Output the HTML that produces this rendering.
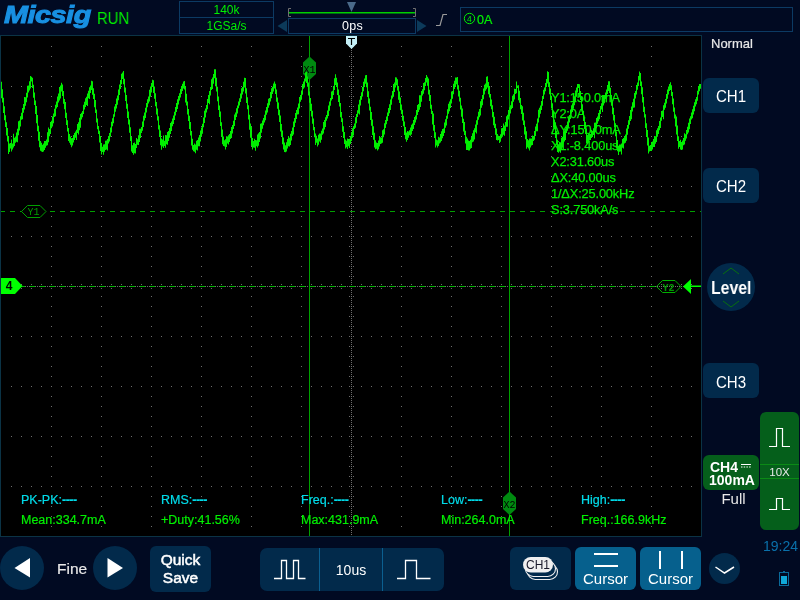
<!DOCTYPE html>
<html><head><meta charset="utf-8"><style>
*{margin:0;padding:0;box-sizing:border-box}
html,body{width:800px;height:600px;overflow:hidden;background:#010a22;font-family:"Liberation Sans",sans-serif}
.a{position:absolute}
.btn{position:absolute;background:#022a4b;border-radius:6px;color:#fff;text-align:center;will-change:transform}
.t{position:absolute;white-space:nowrap;line-height:1;will-change:transform}
</style></head><body>
<!-- header -->
<div class="t" style="left:4px;top:3px;font-size:24px;font-weight:bold;font-style:italic;color:#1890e2;letter-spacing:-0.4px;transform:scaleX(1.2);transform-origin:0 0;-webkit-text-stroke:1px #1890e2">Micsig</div>
<div class="t" style="left:97px;top:11px;font-size:16px;color:#00f000;transform:scaleX(0.93);transform-origin:0 0">RUN</div>
<div class="a" style="left:179px;top:1px;width:95px;height:33px;border:1px solid #0c3a63"></div>
<div class="a" style="left:179px;top:17px;width:95px;height:1px;background:#0c3a63"></div>
<div class="t" style="left:179px;top:4px;width:95px;text-align:center;font-size:12px;color:#00f000">140k</div>
<div class="t" style="left:179px;top:20px;width:95px;text-align:center;font-size:12px;color:#00f000">1GSa/s</div>

<svg class="a" style="left:0;top:0" width="800" height="600">
  <!-- display -->
  <rect x="0.5" y="35.5" width="701" height="501" fill="#000" stroke="#0b3345" stroke-width="1"/>
  <path d="M51 46h1v1h-1zM51 56h1v1h-1zM51 66h1v1h-1zM51 76h1v1h-1zM51 86h1v1h-1zM51 96h1v1h-1zM51 106h1v1h-1zM51 116h1v1h-1zM51 126h1v1h-1zM51 136h1v1h-1zM51 146h1v1h-1zM51 156h1v1h-1zM51 166h1v1h-1zM51 176h1v1h-1zM51 186h1v1h-1zM51 196h1v1h-1zM51 206h1v1h-1zM51 216h1v1h-1zM51 226h1v1h-1zM51 236h1v1h-1zM51 246h1v1h-1zM51 256h1v1h-1zM51 266h1v1h-1zM51 276h1v1h-1zM51 286h1v1h-1zM51 296h1v1h-1zM51 306h1v1h-1zM51 316h1v1h-1zM51 326h1v1h-1zM51 336h1v1h-1zM51 346h1v1h-1zM51 356h1v1h-1zM51 366h1v1h-1zM51 376h1v1h-1zM51 386h1v1h-1zM51 396h1v1h-1zM51 406h1v1h-1zM51 416h1v1h-1zM51 426h1v1h-1zM51 436h1v1h-1zM51 446h1v1h-1zM51 456h1v1h-1zM51 466h1v1h-1zM51 476h1v1h-1zM51 486h1v1h-1zM51 496h1v1h-1zM51 506h1v1h-1zM51 516h1v1h-1zM51 526h1v1h-1zM101 46h1v1h-1zM101 56h1v1h-1zM101 66h1v1h-1zM101 76h1v1h-1zM101 86h1v1h-1zM101 96h1v1h-1zM101 106h1v1h-1zM101 116h1v1h-1zM101 126h1v1h-1zM101 136h1v1h-1zM101 146h1v1h-1zM101 156h1v1h-1zM101 166h1v1h-1zM101 176h1v1h-1zM101 186h1v1h-1zM101 196h1v1h-1zM101 206h1v1h-1zM101 216h1v1h-1zM101 226h1v1h-1zM101 236h1v1h-1zM101 246h1v1h-1zM101 256h1v1h-1zM101 266h1v1h-1zM101 276h1v1h-1zM101 286h1v1h-1zM101 296h1v1h-1zM101 306h1v1h-1zM101 316h1v1h-1zM101 326h1v1h-1zM101 336h1v1h-1zM101 346h1v1h-1zM101 356h1v1h-1zM101 366h1v1h-1zM101 376h1v1h-1zM101 386h1v1h-1zM101 396h1v1h-1zM101 406h1v1h-1zM101 416h1v1h-1zM101 426h1v1h-1zM101 436h1v1h-1zM101 446h1v1h-1zM101 456h1v1h-1zM101 466h1v1h-1zM101 476h1v1h-1zM101 486h1v1h-1zM101 496h1v1h-1zM101 506h1v1h-1zM101 516h1v1h-1zM101 526h1v1h-1zM151 46h1v1h-1zM151 56h1v1h-1zM151 66h1v1h-1zM151 76h1v1h-1zM151 86h1v1h-1zM151 96h1v1h-1zM151 106h1v1h-1zM151 116h1v1h-1zM151 126h1v1h-1zM151 136h1v1h-1zM151 146h1v1h-1zM151 156h1v1h-1zM151 166h1v1h-1zM151 176h1v1h-1zM151 186h1v1h-1zM151 196h1v1h-1zM151 206h1v1h-1zM151 216h1v1h-1zM151 226h1v1h-1zM151 236h1v1h-1zM151 246h1v1h-1zM151 256h1v1h-1zM151 266h1v1h-1zM151 276h1v1h-1zM151 286h1v1h-1zM151 296h1v1h-1zM151 306h1v1h-1zM151 316h1v1h-1zM151 326h1v1h-1zM151 336h1v1h-1zM151 346h1v1h-1zM151 356h1v1h-1zM151 366h1v1h-1zM151 376h1v1h-1zM151 386h1v1h-1zM151 396h1v1h-1zM151 406h1v1h-1zM151 416h1v1h-1zM151 426h1v1h-1zM151 436h1v1h-1zM151 446h1v1h-1zM151 456h1v1h-1zM151 466h1v1h-1zM151 476h1v1h-1zM151 486h1v1h-1zM151 496h1v1h-1zM151 506h1v1h-1zM151 516h1v1h-1zM151 526h1v1h-1zM201 46h1v1h-1zM201 56h1v1h-1zM201 66h1v1h-1zM201 76h1v1h-1zM201 86h1v1h-1zM201 96h1v1h-1zM201 106h1v1h-1zM201 116h1v1h-1zM201 126h1v1h-1zM201 136h1v1h-1zM201 146h1v1h-1zM201 156h1v1h-1zM201 166h1v1h-1zM201 176h1v1h-1zM201 186h1v1h-1zM201 196h1v1h-1zM201 206h1v1h-1zM201 216h1v1h-1zM201 226h1v1h-1zM201 236h1v1h-1zM201 246h1v1h-1zM201 256h1v1h-1zM201 266h1v1h-1zM201 276h1v1h-1zM201 286h1v1h-1zM201 296h1v1h-1zM201 306h1v1h-1zM201 316h1v1h-1zM201 326h1v1h-1zM201 336h1v1h-1zM201 346h1v1h-1zM201 356h1v1h-1zM201 366h1v1h-1zM201 376h1v1h-1zM201 386h1v1h-1zM201 396h1v1h-1zM201 406h1v1h-1zM201 416h1v1h-1zM201 426h1v1h-1zM201 436h1v1h-1zM201 446h1v1h-1zM201 456h1v1h-1zM201 466h1v1h-1zM201 476h1v1h-1zM201 486h1v1h-1zM201 496h1v1h-1zM201 506h1v1h-1zM201 516h1v1h-1zM201 526h1v1h-1zM251 46h1v1h-1zM251 56h1v1h-1zM251 66h1v1h-1zM251 76h1v1h-1zM251 86h1v1h-1zM251 96h1v1h-1zM251 106h1v1h-1zM251 116h1v1h-1zM251 126h1v1h-1zM251 136h1v1h-1zM251 146h1v1h-1zM251 156h1v1h-1zM251 166h1v1h-1zM251 176h1v1h-1zM251 186h1v1h-1zM251 196h1v1h-1zM251 206h1v1h-1zM251 216h1v1h-1zM251 226h1v1h-1zM251 236h1v1h-1zM251 246h1v1h-1zM251 256h1v1h-1zM251 266h1v1h-1zM251 276h1v1h-1zM251 286h1v1h-1zM251 296h1v1h-1zM251 306h1v1h-1zM251 316h1v1h-1zM251 326h1v1h-1zM251 336h1v1h-1zM251 346h1v1h-1zM251 356h1v1h-1zM251 366h1v1h-1zM251 376h1v1h-1zM251 386h1v1h-1zM251 396h1v1h-1zM251 406h1v1h-1zM251 416h1v1h-1zM251 426h1v1h-1zM251 436h1v1h-1zM251 446h1v1h-1zM251 456h1v1h-1zM251 466h1v1h-1zM251 476h1v1h-1zM251 486h1v1h-1zM251 496h1v1h-1zM251 506h1v1h-1zM251 516h1v1h-1zM251 526h1v1h-1zM301 46h1v1h-1zM301 56h1v1h-1zM301 66h1v1h-1zM301 76h1v1h-1zM301 86h1v1h-1zM301 96h1v1h-1zM301 106h1v1h-1zM301 116h1v1h-1zM301 126h1v1h-1zM301 136h1v1h-1zM301 146h1v1h-1zM301 156h1v1h-1zM301 166h1v1h-1zM301 176h1v1h-1zM301 186h1v1h-1zM301 196h1v1h-1zM301 206h1v1h-1zM301 216h1v1h-1zM301 226h1v1h-1zM301 236h1v1h-1zM301 246h1v1h-1zM301 256h1v1h-1zM301 266h1v1h-1zM301 276h1v1h-1zM301 286h1v1h-1zM301 296h1v1h-1zM301 306h1v1h-1zM301 316h1v1h-1zM301 326h1v1h-1zM301 336h1v1h-1zM301 346h1v1h-1zM301 356h1v1h-1zM301 366h1v1h-1zM301 376h1v1h-1zM301 386h1v1h-1zM301 396h1v1h-1zM301 406h1v1h-1zM301 416h1v1h-1zM301 426h1v1h-1zM301 436h1v1h-1zM301 446h1v1h-1zM301 456h1v1h-1zM301 466h1v1h-1zM301 476h1v1h-1zM301 486h1v1h-1zM301 496h1v1h-1zM301 506h1v1h-1zM301 516h1v1h-1zM301 526h1v1h-1zM401 46h1v1h-1zM401 56h1v1h-1zM401 66h1v1h-1zM401 76h1v1h-1zM401 86h1v1h-1zM401 96h1v1h-1zM401 106h1v1h-1zM401 116h1v1h-1zM401 126h1v1h-1zM401 136h1v1h-1zM401 146h1v1h-1zM401 156h1v1h-1zM401 166h1v1h-1zM401 176h1v1h-1zM401 186h1v1h-1zM401 196h1v1h-1zM401 206h1v1h-1zM401 216h1v1h-1zM401 226h1v1h-1zM401 236h1v1h-1zM401 246h1v1h-1zM401 256h1v1h-1zM401 266h1v1h-1zM401 276h1v1h-1zM401 286h1v1h-1zM401 296h1v1h-1zM401 306h1v1h-1zM401 316h1v1h-1zM401 326h1v1h-1zM401 336h1v1h-1zM401 346h1v1h-1zM401 356h1v1h-1zM401 366h1v1h-1zM401 376h1v1h-1zM401 386h1v1h-1zM401 396h1v1h-1zM401 406h1v1h-1zM401 416h1v1h-1zM401 426h1v1h-1zM401 436h1v1h-1zM401 446h1v1h-1zM401 456h1v1h-1zM401 466h1v1h-1zM401 476h1v1h-1zM401 486h1v1h-1zM401 496h1v1h-1zM401 506h1v1h-1zM401 516h1v1h-1zM401 526h1v1h-1zM451 46h1v1h-1zM451 56h1v1h-1zM451 66h1v1h-1zM451 76h1v1h-1zM451 86h1v1h-1zM451 96h1v1h-1zM451 106h1v1h-1zM451 116h1v1h-1zM451 126h1v1h-1zM451 136h1v1h-1zM451 146h1v1h-1zM451 156h1v1h-1zM451 166h1v1h-1zM451 176h1v1h-1zM451 186h1v1h-1zM451 196h1v1h-1zM451 206h1v1h-1zM451 216h1v1h-1zM451 226h1v1h-1zM451 236h1v1h-1zM451 246h1v1h-1zM451 256h1v1h-1zM451 266h1v1h-1zM451 276h1v1h-1zM451 286h1v1h-1zM451 296h1v1h-1zM451 306h1v1h-1zM451 316h1v1h-1zM451 326h1v1h-1zM451 336h1v1h-1zM451 346h1v1h-1zM451 356h1v1h-1zM451 366h1v1h-1zM451 376h1v1h-1zM451 386h1v1h-1zM451 396h1v1h-1zM451 406h1v1h-1zM451 416h1v1h-1zM451 426h1v1h-1zM451 436h1v1h-1zM451 446h1v1h-1zM451 456h1v1h-1zM451 466h1v1h-1zM451 476h1v1h-1zM451 486h1v1h-1zM451 496h1v1h-1zM451 506h1v1h-1zM451 516h1v1h-1zM451 526h1v1h-1zM501 46h1v1h-1zM501 56h1v1h-1zM501 66h1v1h-1zM501 76h1v1h-1zM501 86h1v1h-1zM501 96h1v1h-1zM501 106h1v1h-1zM501 116h1v1h-1zM501 126h1v1h-1zM501 136h1v1h-1zM501 146h1v1h-1zM501 156h1v1h-1zM501 166h1v1h-1zM501 176h1v1h-1zM501 186h1v1h-1zM501 196h1v1h-1zM501 206h1v1h-1zM501 216h1v1h-1zM501 226h1v1h-1zM501 236h1v1h-1zM501 246h1v1h-1zM501 256h1v1h-1zM501 266h1v1h-1zM501 276h1v1h-1zM501 286h1v1h-1zM501 296h1v1h-1zM501 306h1v1h-1zM501 316h1v1h-1zM501 326h1v1h-1zM501 336h1v1h-1zM501 346h1v1h-1zM501 356h1v1h-1zM501 366h1v1h-1zM501 376h1v1h-1zM501 386h1v1h-1zM501 396h1v1h-1zM501 406h1v1h-1zM501 416h1v1h-1zM501 426h1v1h-1zM501 436h1v1h-1zM501 446h1v1h-1zM501 456h1v1h-1zM501 466h1v1h-1zM501 476h1v1h-1zM501 486h1v1h-1zM501 496h1v1h-1zM501 506h1v1h-1zM501 516h1v1h-1zM501 526h1v1h-1zM551 46h1v1h-1zM551 56h1v1h-1zM551 66h1v1h-1zM551 76h1v1h-1zM551 86h1v1h-1zM551 96h1v1h-1zM551 106h1v1h-1zM551 116h1v1h-1zM551 126h1v1h-1zM551 136h1v1h-1zM551 146h1v1h-1zM551 156h1v1h-1zM551 166h1v1h-1zM551 176h1v1h-1zM551 186h1v1h-1zM551 196h1v1h-1zM551 206h1v1h-1zM551 216h1v1h-1zM551 226h1v1h-1zM551 236h1v1h-1zM551 246h1v1h-1zM551 256h1v1h-1zM551 266h1v1h-1zM551 276h1v1h-1zM551 286h1v1h-1zM551 296h1v1h-1zM551 306h1v1h-1zM551 316h1v1h-1zM551 326h1v1h-1zM551 336h1v1h-1zM551 346h1v1h-1zM551 356h1v1h-1zM551 366h1v1h-1zM551 376h1v1h-1zM551 386h1v1h-1zM551 396h1v1h-1zM551 406h1v1h-1zM551 416h1v1h-1zM551 426h1v1h-1zM551 436h1v1h-1zM551 446h1v1h-1zM551 456h1v1h-1zM551 466h1v1h-1zM551 476h1v1h-1zM551 486h1v1h-1zM551 496h1v1h-1zM551 506h1v1h-1zM551 516h1v1h-1zM551 526h1v1h-1zM601 46h1v1h-1zM601 56h1v1h-1zM601 66h1v1h-1zM601 76h1v1h-1zM601 86h1v1h-1zM601 96h1v1h-1zM601 106h1v1h-1zM601 116h1v1h-1zM601 126h1v1h-1zM601 136h1v1h-1zM601 146h1v1h-1zM601 156h1v1h-1zM601 166h1v1h-1zM601 176h1v1h-1zM601 186h1v1h-1zM601 196h1v1h-1zM601 206h1v1h-1zM601 216h1v1h-1zM601 226h1v1h-1zM601 236h1v1h-1zM601 246h1v1h-1zM601 256h1v1h-1zM601 266h1v1h-1zM601 276h1v1h-1zM601 286h1v1h-1zM601 296h1v1h-1zM601 306h1v1h-1zM601 316h1v1h-1zM601 326h1v1h-1zM601 336h1v1h-1zM601 346h1v1h-1zM601 356h1v1h-1zM601 366h1v1h-1zM601 376h1v1h-1zM601 386h1v1h-1zM601 396h1v1h-1zM601 406h1v1h-1zM601 416h1v1h-1zM601 426h1v1h-1zM601 436h1v1h-1zM601 446h1v1h-1zM601 456h1v1h-1zM601 466h1v1h-1zM601 476h1v1h-1zM601 486h1v1h-1zM601 496h1v1h-1zM601 506h1v1h-1zM601 516h1v1h-1zM601 526h1v1h-1zM651 46h1v1h-1zM651 56h1v1h-1zM651 66h1v1h-1zM651 76h1v1h-1zM651 86h1v1h-1zM651 96h1v1h-1zM651 106h1v1h-1zM651 116h1v1h-1zM651 126h1v1h-1zM651 136h1v1h-1zM651 146h1v1h-1zM651 156h1v1h-1zM651 166h1v1h-1zM651 176h1v1h-1zM651 186h1v1h-1zM651 196h1v1h-1zM651 206h1v1h-1zM651 216h1v1h-1zM651 226h1v1h-1zM651 236h1v1h-1zM651 246h1v1h-1zM651 256h1v1h-1zM651 266h1v1h-1zM651 276h1v1h-1zM651 286h1v1h-1zM651 296h1v1h-1zM651 306h1v1h-1zM651 316h1v1h-1zM651 326h1v1h-1zM651 336h1v1h-1zM651 346h1v1h-1zM651 356h1v1h-1zM651 366h1v1h-1zM651 376h1v1h-1zM651 386h1v1h-1zM651 396h1v1h-1zM651 406h1v1h-1zM651 416h1v1h-1zM651 426h1v1h-1zM651 436h1v1h-1zM651 446h1v1h-1zM651 456h1v1h-1zM651 466h1v1h-1zM651 476h1v1h-1zM651 486h1v1h-1zM651 496h1v1h-1zM651 506h1v1h-1zM651 516h1v1h-1zM651 526h1v1h-1zM11 86h1v1h-1zM21 86h1v1h-1zM31 86h1v1h-1zM41 86h1v1h-1zM61 86h1v1h-1zM71 86h1v1h-1zM81 86h1v1h-1zM91 86h1v1h-1zM111 86h1v1h-1zM121 86h1v1h-1zM131 86h1v1h-1zM141 86h1v1h-1zM161 86h1v1h-1zM171 86h1v1h-1zM181 86h1v1h-1zM191 86h1v1h-1zM211 86h1v1h-1zM221 86h1v1h-1zM231 86h1v1h-1zM241 86h1v1h-1zM261 86h1v1h-1zM271 86h1v1h-1zM281 86h1v1h-1zM291 86h1v1h-1zM311 86h1v1h-1zM321 86h1v1h-1zM331 86h1v1h-1zM341 86h1v1h-1zM361 86h1v1h-1zM371 86h1v1h-1zM381 86h1v1h-1zM391 86h1v1h-1zM411 86h1v1h-1zM421 86h1v1h-1zM431 86h1v1h-1zM441 86h1v1h-1zM461 86h1v1h-1zM471 86h1v1h-1zM481 86h1v1h-1zM491 86h1v1h-1zM511 86h1v1h-1zM521 86h1v1h-1zM531 86h1v1h-1zM541 86h1v1h-1zM561 86h1v1h-1zM571 86h1v1h-1zM581 86h1v1h-1zM591 86h1v1h-1zM611 86h1v1h-1zM621 86h1v1h-1zM631 86h1v1h-1zM641 86h1v1h-1zM661 86h1v1h-1zM671 86h1v1h-1zM681 86h1v1h-1zM691 86h1v1h-1zM11 136h1v1h-1zM21 136h1v1h-1zM31 136h1v1h-1zM41 136h1v1h-1zM61 136h1v1h-1zM71 136h1v1h-1zM81 136h1v1h-1zM91 136h1v1h-1zM111 136h1v1h-1zM121 136h1v1h-1zM131 136h1v1h-1zM141 136h1v1h-1zM161 136h1v1h-1zM171 136h1v1h-1zM181 136h1v1h-1zM191 136h1v1h-1zM211 136h1v1h-1zM221 136h1v1h-1zM231 136h1v1h-1zM241 136h1v1h-1zM261 136h1v1h-1zM271 136h1v1h-1zM281 136h1v1h-1zM291 136h1v1h-1zM311 136h1v1h-1zM321 136h1v1h-1zM331 136h1v1h-1zM341 136h1v1h-1zM361 136h1v1h-1zM371 136h1v1h-1zM381 136h1v1h-1zM391 136h1v1h-1zM411 136h1v1h-1zM421 136h1v1h-1zM431 136h1v1h-1zM441 136h1v1h-1zM461 136h1v1h-1zM471 136h1v1h-1zM481 136h1v1h-1zM491 136h1v1h-1zM511 136h1v1h-1zM521 136h1v1h-1zM531 136h1v1h-1zM541 136h1v1h-1zM561 136h1v1h-1zM571 136h1v1h-1zM581 136h1v1h-1zM591 136h1v1h-1zM611 136h1v1h-1zM621 136h1v1h-1zM631 136h1v1h-1zM641 136h1v1h-1zM661 136h1v1h-1zM671 136h1v1h-1zM681 136h1v1h-1zM691 136h1v1h-1zM11 186h1v1h-1zM21 186h1v1h-1zM31 186h1v1h-1zM41 186h1v1h-1zM61 186h1v1h-1zM71 186h1v1h-1zM81 186h1v1h-1zM91 186h1v1h-1zM111 186h1v1h-1zM121 186h1v1h-1zM131 186h1v1h-1zM141 186h1v1h-1zM161 186h1v1h-1zM171 186h1v1h-1zM181 186h1v1h-1zM191 186h1v1h-1zM211 186h1v1h-1zM221 186h1v1h-1zM231 186h1v1h-1zM241 186h1v1h-1zM261 186h1v1h-1zM271 186h1v1h-1zM281 186h1v1h-1zM291 186h1v1h-1zM311 186h1v1h-1zM321 186h1v1h-1zM331 186h1v1h-1zM341 186h1v1h-1zM361 186h1v1h-1zM371 186h1v1h-1zM381 186h1v1h-1zM391 186h1v1h-1zM411 186h1v1h-1zM421 186h1v1h-1zM431 186h1v1h-1zM441 186h1v1h-1zM461 186h1v1h-1zM471 186h1v1h-1zM481 186h1v1h-1zM491 186h1v1h-1zM511 186h1v1h-1zM521 186h1v1h-1zM531 186h1v1h-1zM541 186h1v1h-1zM561 186h1v1h-1zM571 186h1v1h-1zM581 186h1v1h-1zM591 186h1v1h-1zM611 186h1v1h-1zM621 186h1v1h-1zM631 186h1v1h-1zM641 186h1v1h-1zM661 186h1v1h-1zM671 186h1v1h-1zM681 186h1v1h-1zM691 186h1v1h-1zM11 236h1v1h-1zM21 236h1v1h-1zM31 236h1v1h-1zM41 236h1v1h-1zM61 236h1v1h-1zM71 236h1v1h-1zM81 236h1v1h-1zM91 236h1v1h-1zM111 236h1v1h-1zM121 236h1v1h-1zM131 236h1v1h-1zM141 236h1v1h-1zM161 236h1v1h-1zM171 236h1v1h-1zM181 236h1v1h-1zM191 236h1v1h-1zM211 236h1v1h-1zM221 236h1v1h-1zM231 236h1v1h-1zM241 236h1v1h-1zM261 236h1v1h-1zM271 236h1v1h-1zM281 236h1v1h-1zM291 236h1v1h-1zM311 236h1v1h-1zM321 236h1v1h-1zM331 236h1v1h-1zM341 236h1v1h-1zM361 236h1v1h-1zM371 236h1v1h-1zM381 236h1v1h-1zM391 236h1v1h-1zM411 236h1v1h-1zM421 236h1v1h-1zM431 236h1v1h-1zM441 236h1v1h-1zM461 236h1v1h-1zM471 236h1v1h-1zM481 236h1v1h-1zM491 236h1v1h-1zM511 236h1v1h-1zM521 236h1v1h-1zM531 236h1v1h-1zM541 236h1v1h-1zM561 236h1v1h-1zM571 236h1v1h-1zM581 236h1v1h-1zM591 236h1v1h-1zM611 236h1v1h-1zM621 236h1v1h-1zM631 236h1v1h-1zM641 236h1v1h-1zM661 236h1v1h-1zM671 236h1v1h-1zM681 236h1v1h-1zM691 236h1v1h-1zM11 336h1v1h-1zM21 336h1v1h-1zM31 336h1v1h-1zM41 336h1v1h-1zM61 336h1v1h-1zM71 336h1v1h-1zM81 336h1v1h-1zM91 336h1v1h-1zM111 336h1v1h-1zM121 336h1v1h-1zM131 336h1v1h-1zM141 336h1v1h-1zM161 336h1v1h-1zM171 336h1v1h-1zM181 336h1v1h-1zM191 336h1v1h-1zM211 336h1v1h-1zM221 336h1v1h-1zM231 336h1v1h-1zM241 336h1v1h-1zM261 336h1v1h-1zM271 336h1v1h-1zM281 336h1v1h-1zM291 336h1v1h-1zM311 336h1v1h-1zM321 336h1v1h-1zM331 336h1v1h-1zM341 336h1v1h-1zM361 336h1v1h-1zM371 336h1v1h-1zM381 336h1v1h-1zM391 336h1v1h-1zM411 336h1v1h-1zM421 336h1v1h-1zM431 336h1v1h-1zM441 336h1v1h-1zM461 336h1v1h-1zM471 336h1v1h-1zM481 336h1v1h-1zM491 336h1v1h-1zM511 336h1v1h-1zM521 336h1v1h-1zM531 336h1v1h-1zM541 336h1v1h-1zM561 336h1v1h-1zM571 336h1v1h-1zM581 336h1v1h-1zM591 336h1v1h-1zM611 336h1v1h-1zM621 336h1v1h-1zM631 336h1v1h-1zM641 336h1v1h-1zM661 336h1v1h-1zM671 336h1v1h-1zM681 336h1v1h-1zM691 336h1v1h-1zM11 386h1v1h-1zM21 386h1v1h-1zM31 386h1v1h-1zM41 386h1v1h-1zM61 386h1v1h-1zM71 386h1v1h-1zM81 386h1v1h-1zM91 386h1v1h-1zM111 386h1v1h-1zM121 386h1v1h-1zM131 386h1v1h-1zM141 386h1v1h-1zM161 386h1v1h-1zM171 386h1v1h-1zM181 386h1v1h-1zM191 386h1v1h-1zM211 386h1v1h-1zM221 386h1v1h-1zM231 386h1v1h-1zM241 386h1v1h-1zM261 386h1v1h-1zM271 386h1v1h-1zM281 386h1v1h-1zM291 386h1v1h-1zM311 386h1v1h-1zM321 386h1v1h-1zM331 386h1v1h-1zM341 386h1v1h-1zM361 386h1v1h-1zM371 386h1v1h-1zM381 386h1v1h-1zM391 386h1v1h-1zM411 386h1v1h-1zM421 386h1v1h-1zM431 386h1v1h-1zM441 386h1v1h-1zM461 386h1v1h-1zM471 386h1v1h-1zM481 386h1v1h-1zM491 386h1v1h-1zM511 386h1v1h-1zM521 386h1v1h-1zM531 386h1v1h-1zM541 386h1v1h-1zM561 386h1v1h-1zM571 386h1v1h-1zM581 386h1v1h-1zM591 386h1v1h-1zM611 386h1v1h-1zM621 386h1v1h-1zM631 386h1v1h-1zM641 386h1v1h-1zM661 386h1v1h-1zM671 386h1v1h-1zM681 386h1v1h-1zM691 386h1v1h-1zM11 436h1v1h-1zM21 436h1v1h-1zM31 436h1v1h-1zM41 436h1v1h-1zM61 436h1v1h-1zM71 436h1v1h-1zM81 436h1v1h-1zM91 436h1v1h-1zM111 436h1v1h-1zM121 436h1v1h-1zM131 436h1v1h-1zM141 436h1v1h-1zM161 436h1v1h-1zM171 436h1v1h-1zM181 436h1v1h-1zM191 436h1v1h-1zM211 436h1v1h-1zM221 436h1v1h-1zM231 436h1v1h-1zM241 436h1v1h-1zM261 436h1v1h-1zM271 436h1v1h-1zM281 436h1v1h-1zM291 436h1v1h-1zM311 436h1v1h-1zM321 436h1v1h-1zM331 436h1v1h-1zM341 436h1v1h-1zM361 436h1v1h-1zM371 436h1v1h-1zM381 436h1v1h-1zM391 436h1v1h-1zM411 436h1v1h-1zM421 436h1v1h-1zM431 436h1v1h-1zM441 436h1v1h-1zM461 436h1v1h-1zM471 436h1v1h-1zM481 436h1v1h-1zM491 436h1v1h-1zM511 436h1v1h-1zM521 436h1v1h-1zM531 436h1v1h-1zM541 436h1v1h-1zM561 436h1v1h-1zM571 436h1v1h-1zM581 436h1v1h-1zM591 436h1v1h-1zM611 436h1v1h-1zM621 436h1v1h-1zM631 436h1v1h-1zM641 436h1v1h-1zM661 436h1v1h-1zM671 436h1v1h-1zM681 436h1v1h-1zM691 436h1v1h-1zM11 486h1v1h-1zM21 486h1v1h-1zM31 486h1v1h-1zM41 486h1v1h-1zM61 486h1v1h-1zM71 486h1v1h-1zM81 486h1v1h-1zM91 486h1v1h-1zM111 486h1v1h-1zM121 486h1v1h-1zM131 486h1v1h-1zM141 486h1v1h-1zM161 486h1v1h-1zM171 486h1v1h-1zM181 486h1v1h-1zM191 486h1v1h-1zM211 486h1v1h-1zM221 486h1v1h-1zM231 486h1v1h-1zM241 486h1v1h-1zM261 486h1v1h-1zM271 486h1v1h-1zM281 486h1v1h-1zM291 486h1v1h-1zM311 486h1v1h-1zM321 486h1v1h-1zM331 486h1v1h-1zM341 486h1v1h-1zM361 486h1v1h-1zM371 486h1v1h-1zM381 486h1v1h-1zM391 486h1v1h-1zM411 486h1v1h-1zM421 486h1v1h-1zM431 486h1v1h-1zM441 486h1v1h-1zM461 486h1v1h-1zM471 486h1v1h-1zM481 486h1v1h-1zM491 486h1v1h-1zM511 486h1v1h-1zM521 486h1v1h-1zM531 486h1v1h-1zM541 486h1v1h-1zM561 486h1v1h-1zM571 486h1v1h-1zM581 486h1v1h-1zM591 486h1v1h-1zM611 486h1v1h-1zM621 486h1v1h-1zM631 486h1v1h-1zM641 486h1v1h-1zM661 486h1v1h-1zM671 486h1v1h-1zM681 486h1v1h-1zM691 486h1v1h-1zM351 36h1v1h-1zM351 38h1v1h-1zM351 40h1v1h-1zM351 42h1v1h-1zM351 44h1v1h-1zM351 46h1v1h-1zM351 48h1v1h-1zM351 50h1v1h-1zM351 52h1v1h-1zM351 54h1v1h-1zM351 56h1v1h-1zM351 58h1v1h-1zM351 60h1v1h-1zM351 62h1v1h-1zM351 64h1v1h-1zM351 66h1v1h-1zM351 68h1v1h-1zM351 70h1v1h-1zM351 72h1v1h-1zM351 74h1v1h-1zM351 76h1v1h-1zM351 78h1v1h-1zM351 80h1v1h-1zM351 82h1v1h-1zM351 84h1v1h-1zM351 86h1v1h-1zM351 88h1v1h-1zM351 90h1v1h-1zM351 92h1v1h-1zM351 94h1v1h-1zM351 96h1v1h-1zM351 98h1v1h-1zM351 100h1v1h-1zM351 102h1v1h-1zM351 104h1v1h-1zM351 106h1v1h-1zM351 108h1v1h-1zM351 110h1v1h-1zM351 112h1v1h-1zM351 114h1v1h-1zM351 116h1v1h-1zM351 118h1v1h-1zM351 120h1v1h-1zM351 122h1v1h-1zM351 124h1v1h-1zM351 126h1v1h-1zM351 128h1v1h-1zM351 130h1v1h-1zM351 132h1v1h-1zM351 134h1v1h-1zM351 136h1v1h-1zM351 138h1v1h-1zM351 140h1v1h-1zM351 142h1v1h-1zM351 144h1v1h-1zM351 146h1v1h-1zM351 148h1v1h-1zM351 150h1v1h-1zM351 152h1v1h-1zM351 154h1v1h-1zM351 156h1v1h-1zM351 158h1v1h-1zM351 160h1v1h-1zM351 162h1v1h-1zM351 164h1v1h-1zM351 166h1v1h-1zM351 168h1v1h-1zM351 170h1v1h-1zM351 172h1v1h-1zM351 174h1v1h-1zM351 176h1v1h-1zM351 178h1v1h-1zM351 180h1v1h-1zM351 182h1v1h-1zM351 184h1v1h-1zM351 186h1v1h-1zM351 188h1v1h-1zM351 190h1v1h-1zM351 192h1v1h-1zM351 194h1v1h-1zM351 196h1v1h-1zM351 198h1v1h-1zM351 200h1v1h-1zM351 202h1v1h-1zM351 204h1v1h-1zM351 206h1v1h-1zM351 208h1v1h-1zM351 210h1v1h-1zM351 212h1v1h-1zM351 214h1v1h-1zM351 216h1v1h-1zM351 218h1v1h-1zM351 220h1v1h-1zM351 222h1v1h-1zM351 224h1v1h-1zM351 226h1v1h-1zM351 228h1v1h-1zM351 230h1v1h-1zM351 232h1v1h-1zM351 234h1v1h-1zM351 236h1v1h-1zM351 238h1v1h-1zM351 240h1v1h-1zM351 242h1v1h-1zM351 244h1v1h-1zM351 246h1v1h-1zM351 248h1v1h-1zM351 250h1v1h-1zM351 252h1v1h-1zM351 254h1v1h-1zM351 256h1v1h-1zM351 258h1v1h-1zM351 260h1v1h-1zM351 262h1v1h-1zM351 264h1v1h-1zM351 266h1v1h-1zM351 268h1v1h-1zM351 270h1v1h-1zM351 272h1v1h-1zM351 274h1v1h-1zM351 276h1v1h-1zM351 278h1v1h-1zM351 280h1v1h-1zM351 282h1v1h-1zM351 284h1v1h-1zM351 286h1v1h-1zM351 288h1v1h-1zM351 290h1v1h-1zM351 292h1v1h-1zM351 294h1v1h-1zM351 296h1v1h-1zM351 298h1v1h-1zM351 300h1v1h-1zM351 302h1v1h-1zM351 304h1v1h-1zM351 306h1v1h-1zM351 308h1v1h-1zM351 310h1v1h-1zM351 312h1v1h-1zM351 314h1v1h-1zM351 316h1v1h-1zM351 318h1v1h-1zM351 320h1v1h-1zM351 322h1v1h-1zM351 324h1v1h-1zM351 326h1v1h-1zM351 328h1v1h-1zM351 330h1v1h-1zM351 332h1v1h-1zM351 334h1v1h-1zM351 336h1v1h-1zM351 338h1v1h-1zM351 340h1v1h-1zM351 342h1v1h-1zM351 344h1v1h-1zM351 346h1v1h-1zM351 348h1v1h-1zM351 350h1v1h-1zM351 352h1v1h-1zM351 354h1v1h-1zM351 356h1v1h-1zM351 358h1v1h-1zM351 360h1v1h-1zM351 362h1v1h-1zM351 364h1v1h-1zM351 366h1v1h-1zM351 368h1v1h-1zM351 370h1v1h-1zM351 372h1v1h-1zM351 374h1v1h-1zM351 376h1v1h-1zM351 378h1v1h-1zM351 380h1v1h-1zM351 382h1v1h-1zM351 384h1v1h-1zM351 386h1v1h-1zM351 388h1v1h-1zM351 390h1v1h-1zM351 392h1v1h-1zM351 394h1v1h-1zM351 396h1v1h-1zM351 398h1v1h-1zM351 400h1v1h-1zM351 402h1v1h-1zM351 404h1v1h-1zM351 406h1v1h-1zM351 408h1v1h-1zM351 410h1v1h-1zM351 412h1v1h-1zM351 414h1v1h-1zM351 416h1v1h-1zM351 418h1v1h-1zM351 420h1v1h-1zM351 422h1v1h-1zM351 424h1v1h-1zM351 426h1v1h-1zM351 428h1v1h-1zM351 430h1v1h-1zM351 432h1v1h-1zM351 434h1v1h-1zM351 436h1v1h-1zM351 438h1v1h-1zM351 440h1v1h-1zM351 442h1v1h-1zM351 444h1v1h-1zM351 446h1v1h-1zM351 448h1v1h-1zM351 450h1v1h-1zM351 452h1v1h-1zM351 454h1v1h-1zM351 456h1v1h-1zM351 458h1v1h-1zM351 460h1v1h-1zM351 462h1v1h-1zM351 464h1v1h-1zM351 466h1v1h-1zM351 468h1v1h-1zM351 470h1v1h-1zM351 472h1v1h-1zM351 474h1v1h-1zM351 476h1v1h-1zM351 478h1v1h-1zM351 480h1v1h-1zM351 482h1v1h-1zM351 484h1v1h-1zM351 486h1v1h-1zM351 488h1v1h-1zM351 490h1v1h-1zM351 492h1v1h-1zM351 494h1v1h-1zM351 496h1v1h-1zM351 498h1v1h-1zM351 500h1v1h-1zM351 502h1v1h-1zM351 504h1v1h-1zM351 506h1v1h-1zM351 508h1v1h-1zM351 510h1v1h-1zM351 512h1v1h-1zM351 514h1v1h-1zM351 516h1v1h-1zM351 518h1v1h-1zM351 520h1v1h-1zM351 522h1v1h-1zM351 524h1v1h-1zM351 526h1v1h-1zM351 528h1v1h-1zM351 530h1v1h-1zM351 532h1v1h-1zM351 534h1v1h-1zM349 46h1v1h-1zM353 46h1v1h-1zM349 56h1v1h-1zM353 56h1v1h-1zM349 66h1v1h-1zM353 66h1v1h-1zM349 76h1v1h-1zM353 76h1v1h-1zM349 86h1v1h-1zM353 86h1v1h-1zM349 96h1v1h-1zM353 96h1v1h-1zM349 106h1v1h-1zM353 106h1v1h-1zM349 116h1v1h-1zM353 116h1v1h-1zM349 126h1v1h-1zM353 126h1v1h-1zM349 136h1v1h-1zM353 136h1v1h-1zM349 146h1v1h-1zM353 146h1v1h-1zM349 156h1v1h-1zM353 156h1v1h-1zM349 166h1v1h-1zM353 166h1v1h-1zM349 176h1v1h-1zM353 176h1v1h-1zM349 186h1v1h-1zM353 186h1v1h-1zM349 196h1v1h-1zM353 196h1v1h-1zM349 206h1v1h-1zM353 206h1v1h-1zM349 216h1v1h-1zM353 216h1v1h-1zM349 226h1v1h-1zM353 226h1v1h-1zM349 236h1v1h-1zM353 236h1v1h-1zM349 246h1v1h-1zM353 246h1v1h-1zM349 256h1v1h-1zM353 256h1v1h-1zM349 266h1v1h-1zM353 266h1v1h-1zM349 276h1v1h-1zM353 276h1v1h-1zM349 286h1v1h-1zM353 286h1v1h-1zM349 296h1v1h-1zM353 296h1v1h-1zM349 306h1v1h-1zM353 306h1v1h-1zM349 316h1v1h-1zM353 316h1v1h-1zM349 326h1v1h-1zM353 326h1v1h-1zM349 336h1v1h-1zM353 336h1v1h-1zM349 346h1v1h-1zM353 346h1v1h-1zM349 356h1v1h-1zM353 356h1v1h-1zM349 366h1v1h-1zM353 366h1v1h-1zM349 376h1v1h-1zM353 376h1v1h-1zM349 386h1v1h-1zM353 386h1v1h-1zM349 396h1v1h-1zM353 396h1v1h-1zM349 406h1v1h-1zM353 406h1v1h-1zM349 416h1v1h-1zM353 416h1v1h-1zM349 426h1v1h-1zM353 426h1v1h-1zM349 436h1v1h-1zM353 436h1v1h-1zM349 446h1v1h-1zM353 446h1v1h-1zM349 456h1v1h-1zM353 456h1v1h-1zM349 466h1v1h-1zM353 466h1v1h-1zM349 476h1v1h-1zM353 476h1v1h-1zM349 486h1v1h-1zM353 486h1v1h-1zM349 496h1v1h-1zM353 496h1v1h-1zM349 506h1v1h-1zM353 506h1v1h-1zM349 516h1v1h-1zM353 516h1v1h-1zM349 526h1v1h-1zM353 526h1v1h-1zM1 286h1v1h-1zM3 286h1v1h-1zM5 286h1v1h-1zM7 286h1v1h-1zM9 286h1v1h-1zM11 286h1v1h-1zM13 286h1v1h-1zM15 286h1v1h-1zM17 286h1v1h-1zM19 286h1v1h-1zM21 286h1v1h-1zM23 286h1v1h-1zM25 286h1v1h-1zM27 286h1v1h-1zM29 286h1v1h-1zM31 286h1v1h-1zM33 286h1v1h-1zM35 286h1v1h-1zM37 286h1v1h-1zM39 286h1v1h-1zM41 286h1v1h-1zM43 286h1v1h-1zM45 286h1v1h-1zM47 286h1v1h-1zM49 286h1v1h-1zM51 286h1v1h-1zM53 286h1v1h-1zM55 286h1v1h-1zM57 286h1v1h-1zM59 286h1v1h-1zM61 286h1v1h-1zM63 286h1v1h-1zM65 286h1v1h-1zM67 286h1v1h-1zM69 286h1v1h-1zM71 286h1v1h-1zM73 286h1v1h-1zM75 286h1v1h-1zM77 286h1v1h-1zM79 286h1v1h-1zM81 286h1v1h-1zM83 286h1v1h-1zM85 286h1v1h-1zM87 286h1v1h-1zM89 286h1v1h-1zM91 286h1v1h-1zM93 286h1v1h-1zM95 286h1v1h-1zM97 286h1v1h-1zM99 286h1v1h-1zM101 286h1v1h-1zM103 286h1v1h-1zM105 286h1v1h-1zM107 286h1v1h-1zM109 286h1v1h-1zM111 286h1v1h-1zM113 286h1v1h-1zM115 286h1v1h-1zM117 286h1v1h-1zM119 286h1v1h-1zM121 286h1v1h-1zM123 286h1v1h-1zM125 286h1v1h-1zM127 286h1v1h-1zM129 286h1v1h-1zM131 286h1v1h-1zM133 286h1v1h-1zM135 286h1v1h-1zM137 286h1v1h-1zM139 286h1v1h-1zM141 286h1v1h-1zM143 286h1v1h-1zM145 286h1v1h-1zM147 286h1v1h-1zM149 286h1v1h-1zM151 286h1v1h-1zM153 286h1v1h-1zM155 286h1v1h-1zM157 286h1v1h-1zM159 286h1v1h-1zM161 286h1v1h-1zM163 286h1v1h-1zM165 286h1v1h-1zM167 286h1v1h-1zM169 286h1v1h-1zM171 286h1v1h-1zM173 286h1v1h-1zM175 286h1v1h-1zM177 286h1v1h-1zM179 286h1v1h-1zM181 286h1v1h-1zM183 286h1v1h-1zM185 286h1v1h-1zM187 286h1v1h-1zM189 286h1v1h-1zM191 286h1v1h-1zM193 286h1v1h-1zM195 286h1v1h-1zM197 286h1v1h-1zM199 286h1v1h-1zM201 286h1v1h-1zM203 286h1v1h-1zM205 286h1v1h-1zM207 286h1v1h-1zM209 286h1v1h-1zM211 286h1v1h-1zM213 286h1v1h-1zM215 286h1v1h-1zM217 286h1v1h-1zM219 286h1v1h-1zM221 286h1v1h-1zM223 286h1v1h-1zM225 286h1v1h-1zM227 286h1v1h-1zM229 286h1v1h-1zM231 286h1v1h-1zM233 286h1v1h-1zM235 286h1v1h-1zM237 286h1v1h-1zM239 286h1v1h-1zM241 286h1v1h-1zM243 286h1v1h-1zM245 286h1v1h-1zM247 286h1v1h-1zM249 286h1v1h-1zM251 286h1v1h-1zM253 286h1v1h-1zM255 286h1v1h-1zM257 286h1v1h-1zM259 286h1v1h-1zM261 286h1v1h-1zM263 286h1v1h-1zM265 286h1v1h-1zM267 286h1v1h-1zM269 286h1v1h-1zM271 286h1v1h-1zM273 286h1v1h-1zM275 286h1v1h-1zM277 286h1v1h-1zM279 286h1v1h-1zM281 286h1v1h-1zM283 286h1v1h-1zM285 286h1v1h-1zM287 286h1v1h-1zM289 286h1v1h-1zM291 286h1v1h-1zM293 286h1v1h-1zM295 286h1v1h-1zM297 286h1v1h-1zM299 286h1v1h-1zM301 286h1v1h-1zM303 286h1v1h-1zM305 286h1v1h-1zM307 286h1v1h-1zM309 286h1v1h-1zM311 286h1v1h-1zM313 286h1v1h-1zM315 286h1v1h-1zM317 286h1v1h-1zM319 286h1v1h-1zM321 286h1v1h-1zM323 286h1v1h-1zM325 286h1v1h-1zM327 286h1v1h-1zM329 286h1v1h-1zM331 286h1v1h-1zM333 286h1v1h-1zM335 286h1v1h-1zM337 286h1v1h-1zM339 286h1v1h-1zM341 286h1v1h-1zM343 286h1v1h-1zM345 286h1v1h-1zM347 286h1v1h-1zM349 286h1v1h-1zM351 286h1v1h-1zM353 286h1v1h-1zM355 286h1v1h-1zM357 286h1v1h-1zM359 286h1v1h-1zM361 286h1v1h-1zM363 286h1v1h-1zM365 286h1v1h-1zM367 286h1v1h-1zM369 286h1v1h-1zM371 286h1v1h-1zM373 286h1v1h-1zM375 286h1v1h-1zM377 286h1v1h-1zM379 286h1v1h-1zM381 286h1v1h-1zM383 286h1v1h-1zM385 286h1v1h-1zM387 286h1v1h-1zM389 286h1v1h-1zM391 286h1v1h-1zM393 286h1v1h-1zM395 286h1v1h-1zM397 286h1v1h-1zM399 286h1v1h-1zM401 286h1v1h-1zM403 286h1v1h-1zM405 286h1v1h-1zM407 286h1v1h-1zM409 286h1v1h-1zM411 286h1v1h-1zM413 286h1v1h-1zM415 286h1v1h-1zM417 286h1v1h-1zM419 286h1v1h-1zM421 286h1v1h-1zM423 286h1v1h-1zM425 286h1v1h-1zM427 286h1v1h-1zM429 286h1v1h-1zM431 286h1v1h-1zM433 286h1v1h-1zM435 286h1v1h-1zM437 286h1v1h-1zM439 286h1v1h-1zM441 286h1v1h-1zM443 286h1v1h-1zM445 286h1v1h-1zM447 286h1v1h-1zM449 286h1v1h-1zM451 286h1v1h-1zM453 286h1v1h-1zM455 286h1v1h-1zM457 286h1v1h-1zM459 286h1v1h-1zM461 286h1v1h-1zM463 286h1v1h-1zM465 286h1v1h-1zM467 286h1v1h-1zM469 286h1v1h-1zM471 286h1v1h-1zM473 286h1v1h-1zM475 286h1v1h-1zM477 286h1v1h-1zM479 286h1v1h-1zM481 286h1v1h-1zM483 286h1v1h-1zM485 286h1v1h-1zM487 286h1v1h-1zM489 286h1v1h-1zM491 286h1v1h-1zM493 286h1v1h-1zM495 286h1v1h-1zM497 286h1v1h-1zM499 286h1v1h-1zM501 286h1v1h-1zM503 286h1v1h-1zM505 286h1v1h-1zM507 286h1v1h-1zM509 286h1v1h-1zM511 286h1v1h-1zM513 286h1v1h-1zM515 286h1v1h-1zM517 286h1v1h-1zM519 286h1v1h-1zM521 286h1v1h-1zM523 286h1v1h-1zM525 286h1v1h-1zM527 286h1v1h-1zM529 286h1v1h-1zM531 286h1v1h-1zM533 286h1v1h-1zM535 286h1v1h-1zM537 286h1v1h-1zM539 286h1v1h-1zM541 286h1v1h-1zM543 286h1v1h-1zM545 286h1v1h-1zM547 286h1v1h-1zM549 286h1v1h-1zM551 286h1v1h-1zM553 286h1v1h-1zM555 286h1v1h-1zM557 286h1v1h-1zM559 286h1v1h-1zM561 286h1v1h-1zM563 286h1v1h-1zM565 286h1v1h-1zM567 286h1v1h-1zM569 286h1v1h-1zM571 286h1v1h-1zM573 286h1v1h-1zM575 286h1v1h-1zM577 286h1v1h-1zM579 286h1v1h-1zM581 286h1v1h-1zM583 286h1v1h-1zM585 286h1v1h-1zM587 286h1v1h-1zM589 286h1v1h-1zM591 286h1v1h-1zM593 286h1v1h-1zM595 286h1v1h-1zM597 286h1v1h-1zM599 286h1v1h-1zM601 286h1v1h-1zM603 286h1v1h-1zM605 286h1v1h-1zM607 286h1v1h-1zM609 286h1v1h-1zM611 286h1v1h-1zM613 286h1v1h-1zM615 286h1v1h-1zM617 286h1v1h-1zM619 286h1v1h-1zM621 286h1v1h-1zM623 286h1v1h-1zM625 286h1v1h-1zM627 286h1v1h-1zM629 286h1v1h-1zM631 286h1v1h-1zM633 286h1v1h-1zM635 286h1v1h-1zM637 286h1v1h-1zM639 286h1v1h-1zM641 286h1v1h-1zM643 286h1v1h-1zM645 286h1v1h-1zM647 286h1v1h-1zM649 286h1v1h-1zM651 286h1v1h-1zM653 286h1v1h-1zM655 286h1v1h-1zM657 286h1v1h-1zM659 286h1v1h-1zM661 286h1v1h-1zM663 286h1v1h-1zM665 286h1v1h-1zM667 286h1v1h-1zM669 286h1v1h-1zM671 286h1v1h-1zM673 286h1v1h-1zM675 286h1v1h-1zM677 286h1v1h-1zM679 286h1v1h-1zM681 286h1v1h-1zM683 286h1v1h-1zM685 286h1v1h-1zM687 286h1v1h-1zM689 286h1v1h-1zM691 286h1v1h-1zM693 286h1v1h-1zM695 286h1v1h-1zM697 286h1v1h-1zM699 286h1v1h-1zM11 284h1v1h-1zM11 288h1v1h-1zM21 284h1v1h-1zM21 288h1v1h-1zM31 284h1v1h-1zM31 288h1v1h-1zM41 284h1v1h-1zM41 288h1v1h-1zM51 284h1v1h-1zM51 288h1v1h-1zM61 284h1v1h-1zM61 288h1v1h-1zM71 284h1v1h-1zM71 288h1v1h-1zM81 284h1v1h-1zM81 288h1v1h-1zM91 284h1v1h-1zM91 288h1v1h-1zM101 284h1v1h-1zM101 288h1v1h-1zM111 284h1v1h-1zM111 288h1v1h-1zM121 284h1v1h-1zM121 288h1v1h-1zM131 284h1v1h-1zM131 288h1v1h-1zM141 284h1v1h-1zM141 288h1v1h-1zM151 284h1v1h-1zM151 288h1v1h-1zM161 284h1v1h-1zM161 288h1v1h-1zM171 284h1v1h-1zM171 288h1v1h-1zM181 284h1v1h-1zM181 288h1v1h-1zM191 284h1v1h-1zM191 288h1v1h-1zM201 284h1v1h-1zM201 288h1v1h-1zM211 284h1v1h-1zM211 288h1v1h-1zM221 284h1v1h-1zM221 288h1v1h-1zM231 284h1v1h-1zM231 288h1v1h-1zM241 284h1v1h-1zM241 288h1v1h-1zM251 284h1v1h-1zM251 288h1v1h-1zM261 284h1v1h-1zM261 288h1v1h-1zM271 284h1v1h-1zM271 288h1v1h-1zM281 284h1v1h-1zM281 288h1v1h-1zM291 284h1v1h-1zM291 288h1v1h-1zM301 284h1v1h-1zM301 288h1v1h-1zM311 284h1v1h-1zM311 288h1v1h-1zM321 284h1v1h-1zM321 288h1v1h-1zM331 284h1v1h-1zM331 288h1v1h-1zM341 284h1v1h-1zM341 288h1v1h-1zM351 284h1v1h-1zM351 288h1v1h-1zM361 284h1v1h-1zM361 288h1v1h-1zM371 284h1v1h-1zM371 288h1v1h-1zM381 284h1v1h-1zM381 288h1v1h-1zM391 284h1v1h-1zM391 288h1v1h-1zM401 284h1v1h-1zM401 288h1v1h-1zM411 284h1v1h-1zM411 288h1v1h-1zM421 284h1v1h-1zM421 288h1v1h-1zM431 284h1v1h-1zM431 288h1v1h-1zM441 284h1v1h-1zM441 288h1v1h-1zM451 284h1v1h-1zM451 288h1v1h-1zM461 284h1v1h-1zM461 288h1v1h-1zM471 284h1v1h-1zM471 288h1v1h-1zM481 284h1v1h-1zM481 288h1v1h-1zM491 284h1v1h-1zM491 288h1v1h-1zM501 284h1v1h-1zM501 288h1v1h-1zM511 284h1v1h-1zM511 288h1v1h-1zM521 284h1v1h-1zM521 288h1v1h-1zM531 284h1v1h-1zM531 288h1v1h-1zM541 284h1v1h-1zM541 288h1v1h-1zM551 284h1v1h-1zM551 288h1v1h-1zM561 284h1v1h-1zM561 288h1v1h-1zM571 284h1v1h-1zM571 288h1v1h-1zM581 284h1v1h-1zM581 288h1v1h-1zM591 284h1v1h-1zM591 288h1v1h-1zM601 284h1v1h-1zM601 288h1v1h-1zM611 284h1v1h-1zM611 288h1v1h-1zM621 284h1v1h-1zM621 288h1v1h-1zM631 284h1v1h-1zM631 288h1v1h-1zM641 284h1v1h-1zM641 288h1v1h-1zM651 284h1v1h-1zM651 288h1v1h-1zM661 284h1v1h-1zM661 288h1v1h-1zM671 284h1v1h-1zM671 288h1v1h-1zM681 284h1v1h-1zM681 288h1v1h-1zM691 284h1v1h-1zM691 288h1v1h-1z" fill="#6e6e6e" shape-rendering="crispEdges"/>
  <!-- timeline -->
  <path d="M291 8.5h-2.5v8h2.5M413 8.5h2.5v8h-2.5" fill="none" stroke="#707070" stroke-width="1"/>
  <rect x="289" y="12" width="126" height="1.5" fill="#00d000"/>
  <path d="M347 2h9l-4.5 10z" fill="#4a6a8a"/>
  <rect x="288.5" y="18.5" width="127" height="15" fill="none" stroke="#0c3a63"/>
  <path d="M287 20v12l-9.5-6z" fill="#0c3a5a"/>
  <path d="M417 20v12l9.5-6z" fill="#0c3a5a"/>
  <path d="M436 25.5h4l3-11h4" fill="none" stroke="#9a9a9a" stroke-width="1.2"/>
  <rect x="460.5" y="7.5" width="332" height="24" fill="none" stroke="#0c3a63"/>
  <!-- Y1 cursor -->
  <line x1="1" y1="211.5" x2="701" y2="211.5" stroke="#00a000" stroke-dasharray="5 5" stroke-dashoffset="1"/>
  <!-- Y2 / ch4 level line -->
  <line x1="1" y1="286.5" x2="656" y2="286.5" stroke="#00b400" stroke-dasharray="5 5" stroke-dashoffset="1"/>
  <!-- X1, X2 cursor lines -->
  <rect x="309" y="36" width="1" height="500" fill="#00a000"/>
  <rect x="509" y="36" width="1" height="500" fill="#00a000"/>
</svg>
<div class="t" style="left:0;top:0;width:0;height:0"></div>
<svg class="a" style="left:0;top:0" width="800" height="600">
  <path d="M21.5 211.5l6-6h12.5l6 6l-6 6h-12.5z" fill="#000" stroke="#00a000" stroke-width="1"/>
  <path d="M656.5 286.5l6-6h12.5l6 6l-6 6h-12.5z" fill="none" stroke="#00b000" stroke-width="1"/>
  <path d="M309.5 56.5l6.5 6v11.5l-6.5 6l-6.5-6v-11.5z" fill="#008a10"/>
  <path d="M509.5 491.5l6.5 6v11.5l-6.5 6l-6.5-6v-11.5z" fill="#008a10"/>
  <path d="M1 278h14l7.5 8l-7.5 8h-14z" fill="#00ff00"/>
  <path d="M683 286.5l8-7.5v15z" fill="#00ff00"/>
  <rect x="691" y="285.5" width="10" height="1.5" fill="#00ff00"/>
  <path d="M346 36h11v7.5l-5.5 5.5l-5.5-5.5z" fill="#c4eff6"/><path d="M348 38.5h7M351.5 38.5v6.5" stroke="#000" stroke-width="1.2"/>
</svg>
<div class="t" style="left:27px;top:207.5px;width:13px;text-align:center;font-size:10px;color:#00a000;font-family:'Liberation Mono',monospace">Y1</div>
<div class="t" style="left:662px;top:283.5px;width:13px;text-align:center;font-size:10px;font-weight:bold;color:#009a00;font-family:'Liberation Mono',monospace">Y2</div>
<div class="t" style="left:302px;top:65.5px;width:15px;text-align:center;font-size:10px;color:#000;font-family:'Liberation Mono',monospace">X1</div>
<div class="t" style="left:502px;top:500.5px;width:15px;text-align:center;font-size:10px;color:#000;font-family:'Liberation Mono',monospace">X2</div>
<div class="t" style="left:3px;top:280px;width:12px;text-align:center;font-size:12px;font-weight:bold;color:#000">4</div>


<svg class="a" style="left:0;top:0" width="800" height="600">
  <path d="M1 81.8h1V98.3h-1zM2 89.3h1V102.6h-1zM3 97.8h1V113.0h-1zM4 106.3h1V120.3h-1zM5 115.3h1V127.1h-1zM6 122.3h1V135.6h-1zM7 127.9h1V141.4h-1zM8 135.9h1V153.9h-1zM9 143.4h1V152.1h-1zM10 143.1h1V148.5h-1zM11 139.5h1V151.6h-1zM12 143.5h1V149.6h-1zM13 133.7h1V147.4h-1zM14 137.7h1V146.0h-1zM15 136.5h1V142.8h-1zM16 132.6h1V141.7h-1zM17 128.8h1V142.2h-1zM18 121.3h1V135.2h-1zM19 120.5h1V130.6h-1zM20 116.3h1V126.5h-1zM21 112.8h1V119.7h-1zM22 107.9h1V119.2h-1zM23 103.9h1V112.7h-1zM24 97.1h1V109.5h-1zM25 97.2h1V105.8h-1zM26 92.7h1V102.2h-1zM27 85.8h1V97.6h-1zM28 85.5h1V92.4h-1zM29 81.2h1V90.4h-1zM30 76.1h1V88.5h-1zM31 76.8h1V81.4h-1zM32 77.7h1V88.1h-1zM33 84.8h1V97.7h-1zM34 92.5h1V105.1h-1zM35 100.6h1V114.0h-1zM36 106.1h1V123.3h-1zM37 115.1h1V131.2h-1zM38 125.7h1V140.8h-1zM39 131.8h1V147.2h-1zM40 140.9h1V150.8h-1zM41 142.7h1V151.5h-1zM42 144.8h1V151.9h-1zM43 143.6h1V151.6h-1zM44 141.0h1V150.1h-1zM45 141.1h1V147.8h-1zM46 139.5h1V145.7h-1zM47 132.2h1V145.3h-1zM48 127.5h1V142.2h-1zM49 129.1h1V136.2h-1zM50 121.9h1V134.0h-1zM51 120.7h1V128.3h-1zM52 116.4h1V126.6h-1zM53 113.5h1V123.2h-1zM54 108.7h1V116.9h-1zM55 104.7h1V116.3h-1zM56 101.4h1V108.4h-1zM57 96.6h1V107.1h-1zM58 93.6h1V102.6h-1zM59 87.0h1V100.4h-1zM60 85.4h1V98.4h-1zM61 82.7h1V91.4h-1zM62 84.4h1V96.1h-1zM63 91.0h1V103.7h-1zM64 98.9h1V109.3h-1zM65 102.1h1V118.1h-1zM66 112.7h1V124.9h-1zM67 120.3h1V131.4h-1zM68 128.0h1V141.1h-1zM69 134.1h1V142.7h-1zM70 136.4h1V144.7h-1zM71 138.3h1V147.2h-1zM72 137.9h1V145.6h-1zM73 135.0h1V142.6h-1zM74 133.0h1V140.1h-1zM75 131.5h1V137.8h-1zM76 129.8h1V139.9h-1zM77 123.9h1V133.0h-1zM78 122.3h1V134.4h-1zM79 117.7h1V130.3h-1zM80 114.0h1V127.8h-1zM81 112.7h1V119.4h-1zM82 111.0h1V117.3h-1zM83 104.8h1V114.1h-1zM84 101.7h1V109.6h-1zM85 98.3h1V106.9h-1zM86 96.8h1V104.9h-1zM87 93.5h1V106.1h-1zM88 90.8h1V98.3h-1zM89 87.3h1V98.9h-1zM90 85.4h1V92.9h-1zM91 80.7h1V90.0h-1zM92 81.2h1V94.8h-1zM93 88.3h1V99.0h-1zM94 93.7h1V107.2h-1zM95 99.9h1V112.9h-1zM96 109.5h1V122.5h-1zM97 118.5h1V129.3h-1zM98 125.9h1V134.1h-1zM99 130.7h1V142.5h-1zM100 136.1h1V150.9h-1zM101 143.0h1V154.6h-1zM102 146.8h1V152.1h-1zM103 144.6h1V154.7h-1zM104 144.2h1V151.7h-1zM105 140.8h1V150.1h-1zM106 140.4h1V149.5h-1zM107 139.1h1V150.6h-1zM108 135.9h1V143.5h-1zM109 133.0h1V141.6h-1zM110 127.5h1V136.7h-1zM111 121.7h1V132.4h-1zM112 118.3h1V126.3h-1zM113 114.2h1V123.2h-1zM114 106.5h1V116.7h-1zM115 103.9h1V111.7h-1zM116 98.5h1V108.5h-1zM117 95.5h1V104.8h-1zM118 89.5h1V100.3h-1zM119 84.6h1V94.9h-1zM120 80.1h1V88.9h-1zM121 73.7h1V84.2h-1zM122 72.6h1V79.0h-1zM123 70.9h1V84.2h-1zM124 78.8h1V92.4h-1zM125 87.4h1V101.1h-1zM126 95.0h1V108.8h-1zM127 103.7h1V117.9h-1zM128 111.6h1V124.6h-1zM129 119.6h1V132.8h-1zM130 127.2h1V141.1h-1zM131 137.1h1V151.4h-1zM132 145.2h1V153.0h-1zM133 143.0h1V154.8h-1zM134 142.6h1V153.3h-1zM135 143.9h1V153.4h-1zM136 137.9h1V148.1h-1zM137 139.2h1V144.8h-1zM138 135.3h1V145.0h-1zM139 128.7h1V142.1h-1zM140 128.7h1V138.0h-1zM141 126.9h1V132.9h-1zM142 121.4h1V130.7h-1zM143 115.7h1V127.1h-1zM144 112.5h1V120.5h-1zM145 107.8h1V118.1h-1zM146 103.1h1V112.4h-1zM147 99.2h1V107.3h-1zM148 96.4h1V103.5h-1zM149 89.8h1V101.5h-1zM150 86.4h1V96.8h-1zM151 83.0h1V92.6h-1zM152 79.7h1V86.9h-1zM153 80.3h1V93.0h-1zM154 86.4h1V98.7h-1zM155 93.2h1V106.2h-1zM156 102.1h1V114.6h-1zM157 108.6h1V120.6h-1zM158 116.3h1V129.5h-1zM159 125.2h1V137.1h-1zM160 130.4h1V145.3h-1zM161 138.4h1V149.7h-1zM162 139.6h1V146.5h-1zM163 135.6h1V147.9h-1zM164 140.7h1V146.1h-1zM165 135.0h1V147.8h-1zM166 135.2h1V144.2h-1zM167 131.9h1V144.7h-1zM168 130.9h1V141.0h-1zM169 127.9h1V137.7h-1zM170 123.1h1V134.0h-1zM171 121.5h1V131.1h-1zM172 118.6h1V126.2h-1zM173 115.4h1V123.9h-1zM174 111.7h1V120.1h-1zM175 107.0h1V115.6h-1zM176 103.1h1V112.1h-1zM177 99.3h1V109.1h-1zM178 96.0h1V104.4h-1zM179 93.3h1V100.4h-1zM180 89.0h1V97.4h-1zM181 86.1h1V94.1h-1zM182 83.7h1V91.1h-1zM183 81.4h1V88.6h-1zM184 80.9h1V89.6h-1zM185 86.0h1V102.4h-1zM186 93.8h1V105.5h-1zM187 101.6h1V114.5h-1zM188 109.0h1V121.1h-1zM189 115.8h1V128.9h-1zM190 122.1h1V135.6h-1zM191 131.1h1V145.4h-1zM192 138.8h1V149.7h-1zM193 145.1h1V151.3h-1zM194 143.6h1V151.8h-1zM195 144.5h1V153.2h-1zM196 140.8h1V149.8h-1zM197 139.9h1V150.4h-1zM198 137.6h1V146.3h-1zM199 134.9h1V146.2h-1zM200 130.6h1V141.4h-1zM201 127.4h1V136.5h-1zM202 123.7h1V133.8h-1zM203 117.4h1V127.3h-1zM204 110.7h1V123.0h-1zM205 108.5h1V117.4h-1zM206 105.0h1V112.5h-1zM207 99.0h1V109.3h-1zM208 95.1h1V103.0h-1zM209 90.9h1V104.2h-1zM210 87.0h1V95.4h-1zM211 79.3h1V90.0h-1zM212 77.5h1V89.1h-1zM213 73.9h1V83.8h-1zM214 69.2h1V78.2h-1zM215 69.2h1V86.3h-1zM216 77.7h1V91.4h-1zM217 86.7h1V101.3h-1zM218 96.6h1V110.1h-1zM219 105.5h1V117.1h-1zM220 111.5h1V126.1h-1zM221 122.2h1V136.7h-1zM222 129.5h1V144.3h-1zM223 136.5h1V146.1h-1zM224 140.2h1V146.5h-1zM225 139.3h1V149.6h-1zM226 136.3h1V146.9h-1zM227 136.6h1V143.5h-1zM228 135.3h1V144.4h-1zM229 134.0h1V142.1h-1zM230 130.9h1V139.0h-1zM231 127.1h1V137.9h-1zM232 124.9h1V133.5h-1zM233 120.7h1V129.1h-1zM234 114.6h1V126.0h-1zM235 112.4h1V120.0h-1zM236 108.2h1V117.0h-1zM237 105.6h1V113.6h-1zM238 101.5h1V108.2h-1zM239 98.2h1V105.6h-1zM240 93.4h1V102.1h-1zM241 88.3h1V98.6h-1zM242 87.0h1V94.4h-1zM243 81.8h1V91.4h-1zM244 77.7h1V87.6h-1zM245 78.1h1V93.5h-1zM246 88.2h1V102.9h-1zM247 97.3h1V109.2h-1zM248 105.3h1V119.4h-1zM249 114.7h1V129.8h-1zM250 123.5h1V137.8h-1zM251 126.8h1V146.0h-1zM252 138.0h1V149.4h-1zM253 141.1h1V147.5h-1zM254 138.8h1V147.7h-1zM255 139.9h1V150.8h-1zM256 140.3h1V146.2h-1zM257 134.6h1V147.5h-1zM258 133.2h1V145.7h-1zM259 132.0h1V141.9h-1zM260 123.8h1V138.6h-1zM261 123.3h1V132.7h-1zM262 120.6h1V128.7h-1zM263 117.9h1V125.2h-1zM264 114.8h1V122.5h-1zM265 110.6h1V120.3h-1zM266 106.9h1V114.7h-1zM267 103.2h1V112.6h-1zM268 98.8h1V107.8h-1zM269 98.1h1V105.2h-1zM270 92.1h1V101.4h-1zM271 88.3h1V98.3h-1zM272 86.7h1V93.9h-1zM273 83.4h1V91.4h-1zM274 81.6h1V88.5h-1zM275 83.7h1V93.9h-1zM276 89.6h1V101.8h-1zM277 97.4h1V108.7h-1zM278 102.4h1V115.3h-1zM279 109.7h1V122.1h-1zM280 115.6h1V131.6h-1zM281 124.1h1V136.3h-1zM282 130.5h1V144.2h-1zM283 137.4h1V149.5h-1zM284 142.5h1V152.1h-1zM285 145.2h1V152.3h-1zM286 142.3h1V151.4h-1zM287 139.0h1V148.5h-1zM288 136.0h1V146.2h-1zM289 137.8h1V146.4h-1zM290 133.8h1V145.0h-1zM291 131.0h1V140.6h-1zM292 127.5h1V136.0h-1zM293 121.6h1V134.4h-1zM294 118.1h1V127.0h-1zM295 112.9h1V122.7h-1zM296 110.1h1V119.0h-1zM297 107.4h1V114.4h-1zM298 103.6h1V114.2h-1zM299 97.0h1V108.6h-1zM300 95.0h1V101.8h-1zM301 90.5h1V99.8h-1zM302 84.1h1V94.7h-1zM303 81.4h1V88.7h-1zM304 78.5h1V87.5h-1zM305 72.4h1V81.4h-1zM306 72.1h1V82.9h-1zM307 76.5h1V86.8h-1zM308 82.6h1V95.6h-1zM309 91.6h1V102.8h-1zM310 97.9h1V110.9h-1zM311 103.8h1V116.6h-1zM312 110.8h1V123.8h-1zM313 118.5h1V130.3h-1zM314 126.9h1V137.3h-1zM315 133.4h1V144.9h-1zM316 135.8h1V142.8h-1zM317 138.6h1V146.4h-1zM318 134.7h1V144.8h-1zM319 133.6h1V141.6h-1zM320 133.6h1V142.8h-1zM321 130.8h1V139.8h-1zM322 128.4h1V134.7h-1zM323 122.1h1V133.4h-1zM324 119.9h1V129.4h-1zM325 117.2h1V126.9h-1zM326 115.1h1V120.8h-1zM327 110.6h1V118.5h-1zM328 105.4h1V115.9h-1zM329 101.5h1V110.8h-1zM330 98.0h1V105.8h-1zM331 91.4h1V100.6h-1zM332 90.7h1V98.9h-1zM333 85.9h1V94.9h-1zM334 78.2h1V90.0h-1zM335 74.3h1V84.9h-1zM336 77.7h1V86.9h-1zM337 82.5h1V95.0h-1zM338 89.6h1V102.0h-1zM339 95.2h1V106.4h-1zM340 103.1h1V117.3h-1zM341 111.9h1V121.9h-1zM342 118.2h1V131.7h-1zM343 126.3h1V137.9h-1zM344 131.9h1V144.0h-1zM345 139.5h1V148.5h-1zM346 140.8h1V147.2h-1zM347 138.6h1V149.0h-1zM348 138.9h1V146.3h-1zM349 138.7h1V147.9h-1zM350 135.9h1V144.0h-1zM351 132.3h1V140.9h-1zM352 128.2h1V137.7h-1zM353 126.1h1V135.6h-1zM354 123.4h1V129.0h-1zM355 117.3h1V127.8h-1zM356 113.9h1V123.2h-1zM357 110.3h1V116.9h-1zM358 104.4h1V113.4h-1zM359 99.7h1V114.6h-1zM360 96.1h1V105.4h-1zM361 92.2h1V99.8h-1zM362 86.9h1V96.4h-1zM363 81.7h1V91.3h-1zM364 78.6h1V86.9h-1zM365 75.2h1V83.8h-1zM366 75.1h1V87.3h-1zM367 82.5h1V96.9h-1zM368 91.3h1V103.4h-1zM369 98.4h1V110.5h-1zM370 106.8h1V119.9h-1zM371 112.0h1V125.8h-1zM372 119.5h1V135.1h-1zM373 126.2h1V139.7h-1zM374 132.7h1V147.6h-1zM375 140.3h1V149.2h-1zM376 142.5h1V148.8h-1zM377 143.1h1V150.4h-1zM378 140.6h1V149.2h-1zM379 136.0h1V146.4h-1zM380 137.2h1V144.0h-1zM381 137.5h1V143.6h-1zM382 130.3h1V142.8h-1zM383 129.2h1V137.3h-1zM384 123.3h1V134.4h-1zM385 120.1h1V128.1h-1zM386 116.5h1V124.3h-1zM387 112.4h1V120.9h-1zM388 108.0h1V116.1h-1zM389 104.2h1V113.2h-1zM390 99.6h1V109.9h-1zM391 95.6h1V104.7h-1zM392 91.0h1V98.4h-1zM393 84.0h1V96.8h-1zM394 82.4h1V92.1h-1zM395 77.3h1V87.5h-1zM396 77.5h1V85.2h-1zM397 79.2h1V90.4h-1zM398 86.1h1V99.7h-1zM399 91.4h1V103.0h-1zM400 97.4h1V110.2h-1zM401 104.6h1V114.1h-1zM402 109.8h1V120.7h-1zM403 115.7h1V126.2h-1zM404 121.4h1V135.0h-1zM405 127.1h1V139.2h-1zM406 132.6h1V141.7h-1zM407 130.9h1V140.0h-1zM408 131.4h1V137.8h-1zM409 130.3h1V135.2h-1zM410 127.4h1V135.8h-1zM411 124.8h1V134.4h-1zM412 123.5h1V130.9h-1zM413 120.1h1V129.0h-1zM414 117.0h1V125.1h-1zM415 115.6h1V122.6h-1zM416 110.1h1V119.6h-1zM417 105.0h1V114.9h-1zM418 104.0h1V111.9h-1zM419 95.3h1V109.8h-1zM420 95.2h1V107.1h-1zM421 90.9h1V101.8h-1zM422 89.3h1V95.6h-1zM423 82.9h1V93.8h-1zM424 82.2h1V90.2h-1zM425 78.0h1V86.1h-1zM426 74.9h1V82.5h-1zM427 76.7h1V85.8h-1zM428 78.6h1V94.4h-1zM429 89.8h1V101.0h-1zM430 94.9h1V108.8h-1zM431 104.8h1V114.1h-1zM432 111.1h1V124.5h-1zM433 113.5h1V130.7h-1zM434 125.1h1V137.9h-1zM435 132.2h1V147.6h-1zM436 139.4h1V145.6h-1zM437 140.3h1V147.5h-1zM438 136.7h1V146.0h-1zM439 137.4h1V143.5h-1zM440 134.0h1V142.5h-1zM441 131.2h1V140.9h-1zM442 128.9h1V138.3h-1zM443 128.5h1V135.9h-1zM444 122.5h1V132.9h-1zM445 119.2h1V127.7h-1zM446 115.7h1V125.6h-1zM447 109.2h1V118.8h-1zM448 103.8h1V113.8h-1zM449 101.6h1V111.2h-1zM450 99.3h1V108.1h-1zM451 91.5h1V103.4h-1zM452 91.1h1V98.8h-1zM453 83.8h1V94.2h-1zM454 80.7h1V88.9h-1zM455 77.6h1V86.9h-1zM456 77.6h1V84.3h-1zM457 77.1h1V89.6h-1zM458 85.3h1V96.5h-1zM459 90.7h1V101.6h-1zM460 97.7h1V109.5h-1zM461 105.6h1V116.7h-1zM462 108.5h1V122.9h-1zM463 118.7h1V131.5h-1zM464 122.0h1V135.1h-1zM465 130.8h1V143.6h-1zM466 136.8h1V149.9h-1zM467 138.6h1V149.9h-1zM468 140.4h1V150.4h-1zM469 140.9h1V150.4h-1zM470 139.8h1V148.7h-1zM471 136.7h1V147.9h-1zM472 133.2h1V142.3h-1zM473 130.2h1V141.5h-1zM474 128.2h1V139.6h-1zM475 124.5h1V132.3h-1zM476 120.3h1V133.4h-1zM477 116.6h1V124.7h-1zM478 111.7h1V119.8h-1zM479 108.9h1V117.3h-1zM480 101.3h1V115.4h-1zM481 99.0h1V107.7h-1zM482 95.0h1V105.3h-1zM483 88.4h1V99.2h-1zM484 84.8h1V94.4h-1zM485 83.4h1V90.7h-1zM486 76.8h1V89.2h-1zM487 76.3h1V87.4h-1zM488 81.9h1V94.2h-1zM489 86.1h1V97.4h-1zM490 93.9h1V106.2h-1zM491 99.5h1V109.2h-1zM492 105.2h1V117.2h-1zM493 112.0h1V125.2h-1zM494 116.7h1V128.1h-1zM495 123.7h1V134.7h-1zM496 128.6h1V139.9h-1zM497 134.1h1V140.6h-1zM498 135.8h1V140.1h-1zM499 136.0h1V143.0h-1zM500 134.2h1V141.7h-1zM501 128.3h1V138.2h-1zM502 128.0h1V136.7h-1zM503 123.4h1V134.7h-1zM504 125.5h1V135.7h-1zM505 121.9h1V131.1h-1zM506 116.2h1V126.7h-1zM507 114.7h1V126.8h-1zM508 110.1h1V119.4h-1zM509 107.3h1V116.3h-1zM510 105.2h1V113.5h-1zM511 101.2h1V109.3h-1zM512 95.8h1V107.9h-1zM513 94.2h1V101.8h-1zM514 88.7h1V99.6h-1zM515 88.9h1V94.0h-1zM516 81.6h1V93.2h-1zM517 85.4h1V88.1h-1zM518 85.2h1V100.3h-1zM519 90.8h1V102.8h-1zM520 97.9h1V109.3h-1zM521 105.0h1V113.9h-1zM522 106.2h1V120.4h-1zM523 112.7h1V125.0h-1zM524 120.4h1V134.6h-1zM525 126.7h1V139.2h-1zM526 131.3h1V148.7h-1zM527 139.0h1V147.3h-1zM528 140.2h1V148.5h-1zM529 138.5h1V150.4h-1zM530 138.4h1V147.6h-1zM531 138.5h1V145.4h-1zM532 135.5h1V145.0h-1zM533 135.9h1V141.1h-1zM534 131.0h1V139.8h-1zM535 126.5h1V136.0h-1zM536 123.8h1V131.3h-1zM537 118.5h1V131.2h-1zM538 109.8h1V122.5h-1zM539 107.8h1V117.6h-1zM540 105.5h1V113.7h-1zM541 100.9h1V110.1h-1zM542 96.0h1V105.8h-1zM543 89.7h1V99.1h-1zM544 87.4h1V94.4h-1zM545 83.0h1V91.3h-1zM546 79.1h1V87.0h-1zM547 71.3h1V83.6h-1zM548 72.0h1V87.1h-1zM549 82.2h1V94.3h-1zM550 88.5h1V99.9h-1zM551 95.7h1V108.6h-1zM552 103.2h1V117.6h-1zM553 111.0h1V127.5h-1zM554 119.4h1V129.2h-1zM555 122.2h1V138.1h-1zM556 130.8h1V144.8h-1zM557 139.7h1V151.9h-1zM558 144.3h1V152.7h-1zM559 141.9h1V151.4h-1zM560 142.6h1V152.8h-1zM561 137.7h1V149.4h-1zM562 136.8h1V147.6h-1zM563 131.9h1V143.3h-1zM564 130.4h1V141.4h-1zM565 128.8h1V140.1h-1zM566 126.9h1V133.1h-1zM567 121.6h1V130.8h-1zM568 116.4h1V127.0h-1zM569 114.9h1V122.4h-1zM570 109.6h1V119.1h-1zM571 105.2h1V113.4h-1zM572 103.2h1V111.9h-1zM573 99.5h1V108.8h-1zM574 96.2h1V105.2h-1zM575 90.4h1V100.9h-1zM576 87.6h1V96.7h-1zM577 84.1h1V92.6h-1zM578 84.0h1V88.1h-1zM579 84.2h1V96.7h-1zM580 91.1h1V99.9h-1zM581 96.2h1V110.3h-1zM582 104.2h1V114.9h-1zM583 110.8h1V121.0h-1zM584 117.7h1V129.1h-1zM585 122.1h1V134.1h-1zM586 128.5h1V143.6h-1zM587 135.0h1V144.0h-1zM588 133.6h1V141.8h-1zM589 133.4h1V140.5h-1zM590 134.0h1V140.0h-1zM591 130.0h1V137.9h-1zM592 130.8h1V137.0h-1zM593 128.2h1V134.9h-1zM594 122.8h1V138.2h-1zM595 122.5h1V132.1h-1zM596 118.0h1V128.2h-1zM597 116.5h1V123.8h-1zM598 112.9h1V121.2h-1zM599 110.1h1V119.2h-1zM600 106.1h1V114.0h-1zM601 103.2h1V109.6h-1zM602 101.6h1V112.1h-1zM603 94.9h1V105.6h-1zM604 95.0h1V103.2h-1zM605 92.6h1V99.0h-1zM606 89.5h1V97.6h-1zM607 85.0h1V94.0h-1zM608 81.2h1V90.9h-1zM609 81.2h1V93.0h-1zM610 87.7h1V99.0h-1zM611 95.1h1V105.7h-1zM612 101.8h1V114.2h-1zM613 107.8h1V120.6h-1zM614 114.9h1V127.6h-1zM615 123.3h1V136.3h-1zM616 131.5h1V148.3h-1zM617 140.0h1V151.3h-1zM618 145.8h1V154.9h-1zM619 144.4h1V151.7h-1zM620 144.4h1V151.6h-1zM621 143.4h1V154.6h-1zM622 138.9h1V147.7h-1zM623 138.0h1V148.5h-1zM624 136.0h1V143.6h-1zM625 134.5h1V142.8h-1zM626 128.5h1V140.8h-1zM627 124.9h1V134.7h-1zM628 120.2h1V128.8h-1zM629 115.9h1V124.8h-1zM630 110.1h1V121.0h-1zM631 106.6h1V119.2h-1zM632 102.2h1V111.4h-1zM633 98.7h1V107.7h-1zM634 93.1h1V107.5h-1zM635 91.0h1V98.4h-1zM636 84.9h1V94.4h-1zM637 82.4h1V89.8h-1zM638 76.0h1V85.9h-1zM639 71.5h1V80.6h-1zM640 73.0h1V86.0h-1zM641 81.5h1V94.3h-1zM642 87.3h1V102.5h-1zM643 97.0h1V112.1h-1zM644 106.7h1V117.4h-1zM645 114.2h1V127.9h-1zM646 123.3h1V137.0h-1zM647 130.1h1V145.4h-1zM648 137.5h1V153.4h-1zM649 145.7h1V151.4h-1zM650 145.0h1V150.9h-1zM651 142.0h1V150.9h-1zM652 141.6h1V149.4h-1zM653 138.9h1V147.1h-1zM654 136.0h1V147.1h-1zM655 136.2h1V143.7h-1zM656 130.2h1V141.9h-1zM657 128.2h1V136.8h-1zM658 126.0h1V134.0h-1zM659 120.9h1V130.3h-1zM660 117.5h1V127.9h-1zM661 111.1h1V120.7h-1zM662 110.4h1V117.0h-1zM663 105.3h1V119.3h-1zM664 102.8h1V109.8h-1zM665 99.0h1V107.8h-1zM666 94.1h1V103.6h-1zM667 89.5h1V98.7h-1zM668 86.5h1V94.6h-1zM669 83.9h1V91.1h-1zM670 82.3h1V89.9h-1zM671 85.2h1V95.9h-1zM672 92.0h1V104.2h-1zM673 98.4h1V111.7h-1zM674 107.6h1V118.5h-1zM675 114.6h1V126.5h-1zM676 116.6h1V134.5h-1zM677 125.5h1V141.0h-1zM678 136.2h1V148.7h-1zM679 141.0h1V147.1h-1zM680 139.8h1V149.6h-1zM681 141.9h1V150.0h-1zM682 140.5h1V149.6h-1zM683 138.0h1V145.3h-1zM684 133.2h1V144.4h-1zM685 134.2h1V140.8h-1zM686 130.1h1V138.5h-1zM687 126.8h1V134.2h-1zM688 122.7h1V132.5h-1zM689 118.6h1V129.2h-1zM690 116.3h1V124.1h-1zM691 112.4h1V119.5h-1zM692 109.3h1V118.3h-1zM693 105.8h1V114.6h-1zM694 102.2h1V111.3h-1zM695 99.2h1V106.6h-1zM696 97.0h1V104.2h-1zM697 90.7h1V100.7h-1zM698 86.1h1V94.4h-1zM699 83.9h1V91.3h-1zM700 84.1h1V88.7h-1z" fill="#00ee00"/>
</svg>

<div class="t" style="left:289px;top:20px;width:127px;text-align:center;font-size:12.5px;letter-spacing:0.3px;color:#fff">0ps</div>
<svg class="a" style="left:0;top:0" width="800" height="600"><circle cx="469.5" cy="18.5" r="5.2" fill="none" stroke="#00f000" stroke-width="1"/></svg>
<div class="t" style="left:466.5px;top:14.5px;font-size:8.5px;color:#00f000">4</div>
<div class="t" style="left:477px;top:14px;font-size:12.5px;color:#00f000;-webkit-text-stroke:0.2px #00f000">0A</div>
<div class="t" style="left:711px;top:37px;font-size:13px;color:#e8e8e8;-webkit-text-stroke:0.2px #e8e8e8">Normal</div>

<!-- cursor readout -->
<div class="t" style="left:551px;top:89.5px;font-size:12.8px;letter-spacing:-0.15px;line-height:16px;color:#00f000;-webkit-text-stroke:0.25px #00f000">Y1:150.0mA<br>Y2:0A<br>ΔY:150.0mA<br>X1:-8.400us<br>X2:31.60us<br>ΔX:40.00us<br>1/ΔX:25.00kHz<br>S:3.750kA/s</div>

<!-- measurements -->
<div class="t" style="left:21px;top:494px;font-size:12.5px;color:#00dcea;-webkit-text-stroke:0.2px #00dcea">PK-PK:<b style="letter-spacing:-0.5px">----</b></div>
<div class="t" style="left:161px;top:494px;font-size:12.5px;color:#00dcea;-webkit-text-stroke:0.2px #00dcea">RMS:<b style="letter-spacing:-0.5px">----</b></div>
<div class="t" style="left:301px;top:494px;font-size:12.5px;color:#00dcea;-webkit-text-stroke:0.2px #00dcea">Freq.:<b style="letter-spacing:-0.5px">----</b></div>
<div class="t" style="left:441px;top:494px;font-size:12.5px;color:#00dcea;-webkit-text-stroke:0.2px #00dcea">Low:<b style="letter-spacing:-0.5px">----</b></div>
<div class="t" style="left:581px;top:494px;font-size:12.5px;color:#00dcea;-webkit-text-stroke:0.2px #00dcea">High:<b style="letter-spacing:-0.5px">----</b></div>
<div class="t" style="left:21px;top:514px;font-size:12.5px;color:#00f000;-webkit-text-stroke:0.2px #00f000">Mean:334.7mA</div>
<div class="t" style="left:161px;top:514px;font-size:12.5px;color:#00f000;-webkit-text-stroke:0.2px #00f000">+Duty:41.56%</div>
<div class="t" style="left:301px;top:514px;font-size:12.5px;color:#00f000;-webkit-text-stroke:0.2px #00f000">Max:431.9mA</div>
<div class="t" style="left:441px;top:514px;font-size:12.5px;color:#00f000;-webkit-text-stroke:0.2px #00f000">Min:264.0mA</div>
<div class="t" style="left:581px;top:514px;font-size:12.5px;color:#00f000;-webkit-text-stroke:0.2px #00f000">Freq.:166.9kHz</div>

<!-- right panel -->
<div class="btn" style="left:703px;top:78px;width:56px;height:35px;font-size:16px;line-height:38px;transform:none"><span style="display:inline-block;transform:scaleX(0.94)">CH1</span></div>
<div class="btn" style="left:703px;top:168px;width:56px;height:35px;font-size:16px;line-height:38px"><span style="display:inline-block;transform:scaleX(0.94)">CH2</span></div>
<div class="btn" style="left:703px;top:363px;width:56px;height:35px;font-size:16px;line-height:39px"><span style="display:inline-block;transform:scaleX(0.94)">CH3</span></div>
<div class="a" style="left:707px;top:263px;width:48px;height:48px;border-radius:50%;background:#022a4b"></div>
<svg class="a" style="left:0;top:0" width="800" height="600">
  <path d="M723 274l8-6l8 6M723 301l8 6l8-6" fill="none" stroke="#08700e" stroke-width="1"/>
</svg>
<div class="t" style="left:707px;top:277.5px;width:48px;text-align:center;font-size:19px;font-weight:bold;color:#fff;transform:scaleX(0.83)">Level</div>

<div class="a" style="left:760px;top:412px;width:39px;height:118px;border-radius:6px;background:#055f1b"></div>
<div class="a" style="left:760px;top:464px;width:39px;height:1px;background:#0b8a16"></div>
<div class="a" style="left:760px;top:478px;width:39px;height:1px;background:#0b8a16"></div>
<div class="t" style="left:760px;top:467px;width:39px;text-align:center;font-size:11.5px;color:#e8e8e8">10X</div>
<svg class="a" style="left:0;top:0" width="800" height="600">
  <path d="M769 446.5h7.5v-18h6v18h7.5" fill="none" stroke="#fff" stroke-width="1.2"/>
  <path d="M769 509.5h7.5v-11h6v11h7.5" fill="none" stroke="#fff" stroke-width="1.2"/>
</svg>
<div class="a" style="left:703px;top:455px;width:56px;height:35px;border-radius:6px;background:#055f1b"></div>
<div class="t" style="left:710px;top:460px;font-size:14px;font-weight:bold;color:#fff">CH4</div>
<svg class="a" style="left:0;top:0" width="800" height="600">
  <path d="M741 464.5h10M741 467h1.5M743.7 467h1.5M746.4 467h1.5M749.1 467h1.5" fill="none" stroke="#fff" stroke-width="1"/>
</svg>
<div class="t" style="left:703.5px;top:473px;width:56px;text-align:center;font-size:14px;font-weight:bold;color:#fff">100mA</div>
<div class="t" style="left:703px;top:491px;width:61px;text-align:center;font-size:15px;color:#e8e8e8">Full</div>

<div class="t" style="left:763px;top:539px;font-size:14px;color:#0a70aa">19:24</div>
<div class="a" style="left:709px;top:553px;width:31px;height:31px;border-radius:50%;background:#022a4b"></div>
<svg class="a" style="left:0;top:0" width="800" height="600">
  <path d="M715.5 567l9 6l9.5-6" fill="none" stroke="#fff" stroke-width="1.5"/>
  <rect x="779.5" y="572.5" width="9" height="13" fill="none" stroke="#0a6a9a" stroke-width="1"/>
  <rect x="781" y="576" width="6" height="8" fill="#10a8d8"/>
  <rect x="783" y="571" width="2" height="1.5" fill="#0a6a9a"/>
</svg>

<!-- bottom bar -->
<div class="a" style="left:0;top:546px;width:44px;height:44px;border-radius:50%;background:#022a4b"></div>
<div class="a" style="left:93px;top:546px;width:44px;height:44px;border-radius:50%;background:#022a4b"></div>
<svg class="a" style="left:0;top:0" width="800" height="600">
  <path d="M14.5 568l15.5-10v19.5z" fill="#fff"/>
  <path d="M123 568l-15.5-10v19.5z" fill="#fff"/>
</svg>
<div class="t" style="left:56.5px;top:560.5px;font-size:15.5px;color:#e8e8e8;-webkit-text-stroke:0.2px #e8e8e8">Fine</div>
<div class="btn" style="left:150px;top:546px;width:61px;height:46px;font-size:15.5px;line-height:18px;padding-top:5px;-webkit-text-stroke:0.5px #fff">Quick<br>Save</div>

<div class="btn" style="left:260px;top:548px;width:184px;height:43px;border-radius:7px"></div>
<div class="a" style="left:319px;top:548px;width:1px;height:43px;background:#0b5f90"></div>
<div class="a" style="left:382px;top:548px;width:1px;height:43px;background:#0b5f90"></div>
<svg class="a" style="left:0;top:0" width="800" height="600">
  <path d="M274 578.5h7.5v-18h5v18h7v-18h5v18h7" fill="none" stroke="#fff" stroke-width="1.3"/>
  <path d="M397 578.5h8.5v-18h11v18h14" fill="none" stroke="#fff" stroke-width="1.3"/>
</svg>
<div class="t" style="left:320px;top:563px;width:62px;text-align:center;font-size:14px;color:#fff">10us</div>

<div class="btn" style="left:510px;top:547px;width:61px;height:43px"></div>
<svg class="a" style="left:0;top:0" width="800" height="600">
  <rect x="527.5" y="564" width="30" height="15.5" rx="7.75" fill="#022a4b" stroke="#f0f0f0" stroke-width="1.1"/>
  <rect x="525.5" y="561" width="30" height="15.5" rx="7.75" fill="#022a4b" stroke="#f0f0f0" stroke-width="1.1"/>
  <rect x="523" y="557" width="30" height="15.5" rx="7.75" fill="#f0f0f0"/>
</svg>
<div class="t" style="left:523px;top:559px;width:30px;text-align:center;font-size:12px;color:#1a1a2a">CH1</div>

<div class="btn" style="left:575px;top:547px;width:61px;height:43px;background:#06608d"></div>
<div class="btn" style="left:640px;top:547px;width:61px;height:43px;background:#06608d"></div>
<svg class="a" style="left:0;top:0" width="800" height="600">
  <rect x="594" y="553" width="24" height="2" fill="#fff"/>
  <rect x="594" y="565" width="24" height="2" fill="#fff"/>
  <rect x="659" y="551" width="2" height="18" fill="#fff"/>
  <rect x="681" y="551" width="2" height="18" fill="#fff"/>
</svg>
<div class="t" style="left:575px;top:571px;width:61px;text-align:center;font-size:15px;color:#fff">Cursor</div>
<div class="t" style="left:640px;top:571px;width:61px;text-align:center;font-size:15px;color:#fff">Cursor</div>
</body></html>
